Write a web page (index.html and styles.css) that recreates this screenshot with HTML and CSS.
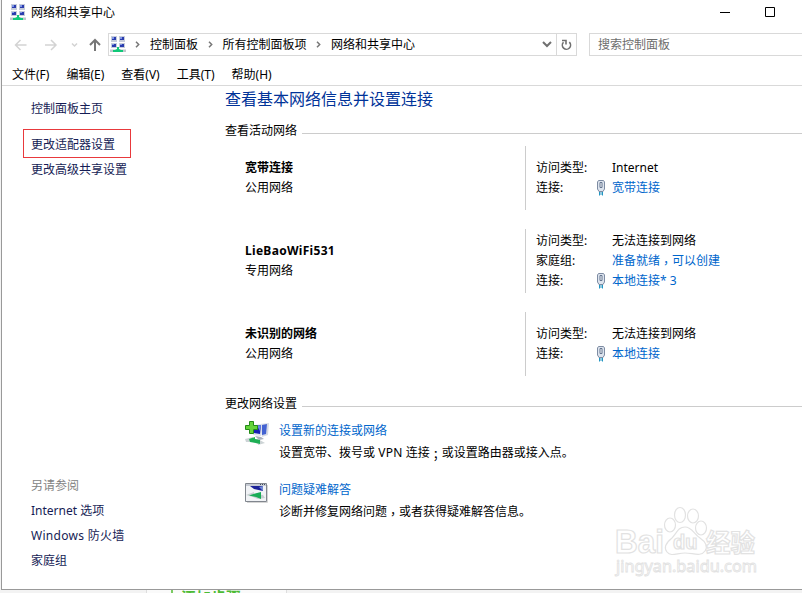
FILE: index.html
```html
<!DOCTYPE html>
<html lang="zh-CN">
<head>
    <meta charset="UTF-8">
    <meta name="viewport" content="width=device-width, initial-scale=1.0">
    <title>网络和共享中心</title>
    <link rel="stylesheet" href="styles.css">
</head>
<body>
    <!-- Shared icons -->
    <svg class="sprite">
        <symbol id="icon-network" viewBox="0 0 16 17">
            <path d="M1 0h6v6H1zM9 0h6v6H9zM1 7h6v5H1zM9 7h6v5H9z" fill="#c6ccda"/>
            <path d="M2 1h4v3H2zM10 1h4v3h-4zM2 8h4v3H2zM10 8h4v3h-4z" fill="#2a3cae"/>
            <path d="M2 1h2v2H2zM10 1h2v2h-2zM2 8h2v1H2zM10 8h2v1h-2z" fill="#7f96e4"/>
            <path d="M0 13.500h16v2.500H0z" fill="#bfc7cc"/>
            <path d="M7 11h2v2l2 1h2v2H3v-2h2l2-1z" fill="#10c878"/>
        </symbol>
        <symbol id="icon-plug" viewBox="0 0 10 16">
            <path d="M2.500.5h5l1 1.500v7L7 11.500H3L1.500 9V2z" fill="#dde4ee" stroke="#7e8ca3"/>
            <path d="M4 2.500h2v5H4z" fill="#f7f9fc" stroke="#64748e"/>
            <path d="M3.500 12v3.500M6.500 12v3.500M5 12v3" stroke="#2295c2"/>
        </symbol>
        <symbol id="chevron" viewBox="0 0 5 7">
            <path d="M1 .8l2.700 2.700L1 6.200" fill="none" stroke="#777" stroke-width="1.500"/>
        </symbol>
    </svg>

    <div class="window">
        <div class="title-bar">
            <svg class="net-icon"><use href="#icon-network"/></svg>
            <span class="title">网络和共享中心</span>
            <svg class="window-buttons" width="56" height="11" viewBox="0 0 56 11">
                <path d="M0 5.500h10M45.500.5h9v9h-9z" fill="none" stroke="#000"/>
            </svg>
        </div>

        <div class="nav-bar">
            <svg class="nav-arrows" width="88" height="14" viewBox="0 0 88 14">
                <g fill="none" stroke="#d3d3d3" stroke-width="1.500">
                    <path d="M12.500 7H1.500M6.500 2L1.500 7l5 5"/>
                    <path d="M31 7h11M37 2l5 5-5 5"/>
                    <path d="M58 5.500l2.500 2.500L63 5.500"/>
                </g>
                <path d="M81 13V2M76 7l5-5 5 5" fill="none" stroke="#777" stroke-width="2"/>
            </svg>
            <div class="address">
                <svg class="net-icon"><use href="#icon-network"/></svg>
                <svg class="chevron"><use href="#chevron"/></svg>
                <span>控制面板</span>
                <svg class="chevron"><use href="#chevron"/></svg>
                <span>所有控制面板项</span>
                <svg class="chevron"><use href="#chevron"/></svg>
                <span>网络和共享中心</span>
                <svg class="drop" width="10" height="7" viewBox="0 0 10 7">
                    <path d="M1 1l4 4 4-4" fill="none" stroke="#707070" stroke-width="2"/>
                </svg>
                <div class="refresh">
                    <svg width="11" height="12" viewBox="0 0 11 12">
                        <path d="M2.500 3.300A4.100 4.100 0 1 0 8.300 3.200M1 1.500h4v4" fill="none" stroke="#707070" stroke-width="1.600"/>
                    </svg>
                </div>
            </div>
            <div class="search">搜索控制面板</div>
        </div>

        <div class="menu-bar">
            <span>文件(F)</span>
            <span>编辑(E)</span>
            <span>查看(V)</span>
            <span>工具(T)</span>
            <span>帮助(H)</span>
        </div>

        <div class="content">
            <div class="sidebar">
                <a class="home">控制面板主页</a>
                <a class="highlight">更改适配器设置</a>
                <a>更改高级共享设置</a>
                <div class="see-also">
                    <span class="muted">另请参阅</span>
                    <a>Internet 选项</a>
                    <a class="wide">Windows 防火墙</a>
                    <a>家庭组</a>
                </div>
            </div>

            <div class="main">
                <h1>查看基本网络信息并设置连接</h1>

                <h2>查看活动网络</h2>
                <div class="networks">
                    <div class="network">
                        <div class="network-name">
                            <strong>宽带连接</strong>
                            <span>公用网络</span>
                        </div>
                        <div class="details">
                            <div class="detail"><span>访问类型:</span><span>Internet</span></div>
                            <div class="detail"><span>连接:</span><svg class="plug"><use href="#icon-plug"/></svg><a class="link">宽带连接</a></div>
                        </div>
                    </div>
                    <div class="network">
                        <div class="network-name">
                            <strong class="wide">LieBaoWiFi531</strong>
                            <span>专用网络</span>
                        </div>
                        <div class="details">
                            <div class="detail"><span>访问类型:</span><span>无法连接到网络</span></div>
                            <div class="detail"><span>家庭组:</span><a class="link">准备就绪<i class="mark" lang="zh-TW">，</i>可以创建</a></div>
                            <div class="detail"><span>连接:</span><svg class="plug"><use href="#icon-plug"/></svg><a class="link">本地连接* 3</a></div>
                        </div>
                    </div>
                    <div class="network">
                        <div class="network-name">
                            <strong>未识别的网络</strong>
                            <span>公用网络</span>
                        </div>
                        <div class="details">
                            <div class="detail"><span>访问类型:</span><span>无法连接到网络</span></div>
                            <div class="detail"><span>连接:</span><svg class="plug"><use href="#icon-plug"/></svg><a class="link">本地连接</a></div>
                        </div>
                    </div>
                </div>

                <h2>更改网络设置</h2>
                <div class="task">
                    <svg width="24" height="25" viewBox="0 0 24 25">
                        <path d="M15 3l9-1-1 12-6 2z" fill="#d5dae5"/>
                        <path d="M17 4l5-1-1 10-4 1z" fill="#4362d2"/>
                        <path d="M8 4l9-1-1 12-8-1z" fill="#dce1ec"/>
                        <path d="M9 5l7-1-1 9-6-1z" fill="#1720b5"/>
                        <path d="M12 5l4-1-1 6z" fill="#6789e8"/>
                        <path d="M10 15l6 1 3 2-5 1z" fill="#aab0bd"/>
                        <path d="M0 18l8-2v2h5l7 4-7 2v-1l-5-2-7 0z" fill="#cdd4d6"/>
                        <path d="M4 18l6-2v2l5 1v4l-4-1-6-1z" fill="#1eaf55"/>
                        <path d="M4.500.5h4v4h4v4h-4v4h-4v-4h-4v-4h4z" fill="#64d43a" stroke="#248a18"/>
                    </svg>
                    <div class="task-text">
                        <a class="link">设置新的连接或网络</a>
                        <span>设置宽带、拨号或 <b class="wide">VPN</b> 连接<i class="mark" lang="zh-TW">；</i>或设置路由器或接入点。</span>
                    </div>
                </div>
                <div class="task">
                    <svg class="troubleshoot" width="23" height="20" viewBox="0 0 23 20">
                        <path d="M.5.5h21v18H.5z" fill="#f1f3f6" stroke="#81868e"/>
                        <path d="M1 1h20v2H1z" fill="#c5cad3"/>
                        <path d="M15 1.500h1M17 1.500h1M19 1.500h1" stroke="#444b5c"/>
                        <path d="M5 3h13v5l-9-2z" fill="#1c2399"/>
                        <path d="M14 4l4-1v5z" fill="#738bd5"/>
                        <path d="M1 12l8-3v2l9 1 2 3-7 1-5-2z" fill="#c7ced0"/>
                        <path d="M4 12.500l6-2 6-1.500v7l-5-2z" fill="#17ac56"/>
                        <path d="M22.500 2v17.500H2" fill="none" stroke="#d5d5d5"/>
                    </svg>
                    <div class="task-text">
                        <a class="link">问题疑难解答</a>
                        <span>诊断并修复网络问题<i class="mark" lang="zh-TW">，</i>或者获得疑难解答信息。</span>
                    </div>
                </div>
            </div>
        </div>
    </div>

    <!-- Page behind the window -->
    <div class="backdrop">
        <div class="backdrop-card"><span>添加步骤 71%</span></div>
    </div>

    <div class="watermark">
        <svg width="150" height="80" viewBox="0 0 150 80">
            <g class="outline">
                <text x="1" y="48" class="brand" textLength="49" lengthAdjust="spacingAndGlyphs">Bai</text>
                <ellipse cx="56" cy="20" rx="5.500" ry="7"/>
                <ellipse cx="66" cy="10" rx="5.500" ry="7.500"/>
                <ellipse cx="79" cy="11" rx="5.500" ry="7"/>
                <ellipse cx="87" cy="23" rx="5.500" ry="7"/>
                <path d="M71 22c7 0 9 7 15 11 6 4 8 9 5 13-4 6-12 2-20 2s-14 4-18-1c-4-5 0-10 5-14 5-5 6-11 13-11z"/>
                <text x="59" y="44" class="du">du</text>
                <text x="92" y="47" class="brand-cn" textLength="49" lengthAdjust="spacingAndGlyphs">经验</text>
                <text x="2" y="67" class="url" textLength="141" lengthAdjust="spacingAndGlyphs">jingyan.baidu.com</text>
            </g>
        </svg>
    </div>
</body>
</html>
```

FILE: styles.css
```css
* {
    box-sizing: border-box;
}
body {
    margin: 0;
    height: 593px;
    overflow: hidden;
    background: #f3f3f3;
    font-family: "Noto Sans", "Noto Sans CJK SC", sans-serif;
    font-size: 12px;
    line-height: 20px;
    color: #000;
    white-space: nowrap;
}
svg {
    display: block;
    flex: none;
}
.sprite {
    position: absolute;
    width: 0;
    height: 0;
}
.window {
    display: flex;
    flex-direction: column;
    height: 590px;
    margin-left: 1px;
    background: #fff;
    border-left: 1px solid #999;
    border-bottom: 1px solid #999;
}
.net-icon {
    width: 16px;
    height: 17px;
}

/* Title bar */
.title-bar {
    display: flex;
    align-items: center;
    height: 25px;
    padding: 0 26px 0 8px;
}
.title {
    margin-left: 5px;
}
.window-buttons {
    margin-left: auto;
}

/* Address bar */
.nav-bar {
    display: flex;
    align-items: center;
    height: 23px;
    margin-top: 8px;
}
.nav-arrows {
    margin: 0 6px 0 12px;
}
.address {
    display: flex;
    align-items: center;
    width: 469px;
    height: 23px;
    padding-left: 1px;
    border: 1px solid #d9d9d9;
}
.address .chevron {
    width: 5px;
    height: 7px;
    margin: 0 10px 0 9.500px;
}
.address .net-icon + .chevron {
    margin-left: 9px;
}
.drop {
    margin-left: auto;
    margin-right: 4px;
}
.refresh {
    display: flex;
    align-items: center;
    justify-content: center;
    width: 20px;
    height: 21px;
    border-left: 1px solid #d9d9d9;
}
.search {
    flex: 1;
    height: 23px;
    margin-left: 12px;
    padding: 1px 0 0 8px;
    border: 1px solid #d9d9d9;
    border-right: none;
    color: #6d6d6d;
}

/* Menu */
.menu-bar {
    display: flex;
    gap: 17px;
    height: 30px;
    padding: 9px 0 0 10px;
    border-bottom: 1px solid #d9d9d9;
}

.content {
    display: flex;
    flex: 1;
}

/* Sidebar */
.sidebar {
    display: flex;
    flex-direction: column;
    align-items: flex-start;
    width: 223px;
    padding: 10px 0 16px 29px;
    line-height: 25px;
    color: #151c55;
}
.sidebar .home {
    margin-bottom: 8px;
}
.sidebar .highlight {
    width: 108px;
    height: 29px;
    margin-left: -8px;
    padding: 2px 0 0 7px;
    border: 1px solid #e8393c;
}
.sidebar .highlight + a {
    margin-top: -1px;
}
.see-also {
    display: flex;
    flex-direction: column;
    margin-top: auto;
}
.muted {
    color: #838383;
}
.wide {
    letter-spacing: 0.3px;
}

/* Main pane */
.main {
    flex: 1;
}
h1 {
    margin: 0;
    font-size: 16px;
    font-weight: normal;
    line-height: 26px;
    color: #003399;
}
h2 {
    display: flex;
    align-items: center;
    margin: 9px 0 0;
    font-size: 12px;
    font-weight: normal;
    line-height: 20px;
}
h2::after {
    content: "";
    flex: 1;
    height: 1px;
    margin: 4px 0 0 5px;
    background: #ccc;
}
.networks {
    display: flex;
    flex-direction: column;
    gap: 19px;
    margin: 5px 0 18px;
}
.network {
    display: flex;
    height: 64px;
    padding-left: 20px;
}
.network-name,
.details {
    display: flex;
    flex-direction: column;
    justify-content: center;
}
.network-name {
    width: 280px;
}
.details {
    padding-left: 10px;
    border-left: 1px solid #ccc;
}
.detail {
    display: grid;
    grid-template-columns: 60px 16px auto;
    align-items: center;
}
.detail > :last-child {
    grid-column: 3;
}
.plug {
    width: 10px;
    height: 16px;
}
.link {
    color: #0066cc;
}
/* Centred punctuation, dropped to the baseline */
.mark {
    position: relative;
    top: 3px;
    font-family: "Noto Sans CJK TC", sans-serif;
    font-style: normal;
    line-height: 1;
}
.task {
    display: flex;
    height: 59px;
    padding: 7px 0 0 20px;
}
.task-text {
    display: flex;
    flex-direction: column;
    line-height: 22px;
    margin-left: 10px;
    margin-top: -1px;
}
.task-text b {
    font-weight: normal;
}
.task .troubleshoot {
    margin: 3px 1px 0 0;
}

/* Page behind the window */
.backdrop {
    display: flex;
    height: 3px;
    padding-left: 146px;
    overflow: hidden;
}
.backdrop-card {
    width: 141px;
    padding-left: 24px;
    background: #fafafa;
    border: solid #ddd;
    border-width: 0 1px;
}
.backdrop-card span {
    display: block;
    width: 115px;
    margin-top: -1px;
    padding-left: 8px;
    border-left: 2px solid #7bcb63;
    color: #4dbb35;
    font-size: 15px;
    font-weight: bold;
    line-height: 16px;
}

.watermark {
    position: absolute;
    left: 614px;
    top: 505px;
}
.outline {
    fill: #fff;
    stroke: #e2e2e2;
    stroke-width: 1.2;
}
.brand {
    font: bold 33px "Liberation Sans", sans-serif;
}
.du {
    font: bold 20px "Liberation Sans", sans-serif;
}
.brand-cn {
    font: bold 25px "Noto Sans CJK SC", sans-serif;
}
.url {
    font: 17px "Noto Sans", sans-serif;
    stroke-width: 0.9;
}
```
